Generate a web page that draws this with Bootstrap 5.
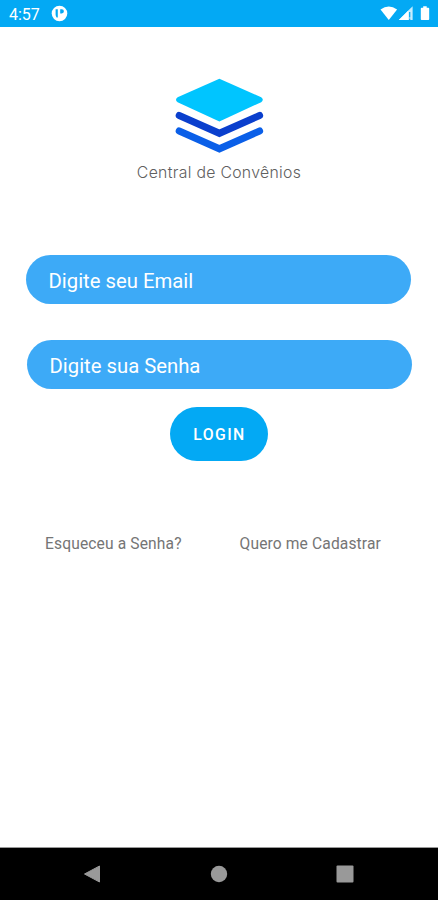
<!DOCTYPE html>
<html lang="pt-BR">
<head>
<meta charset="utf-8">
<meta name="viewport" content="width=device-width, initial-scale=1">
<title>Central de Convênios</title>
<link href="https://cdn.jsdelivr.net/npm/bootstrap@5.3.0/dist/css/bootstrap.min.css" rel="stylesheet">
<style>
body{font-family:Roboto,sans-serif;height:900px;color:#757575;background:#fff;overflow:hidden}
svg{display:block;flex:none}
.status-bar{height:27px;background:#03a9f4;color:#fff;font-size:16px;line-height:27px;padding:0 8px 0 9px}
.status-bar .clock{width:42px;padding-top:1px}
.brand{padding:51px 0 0 0}
.brand-name{font-family:Inter,sans-serif;font-weight:300;font-size:15.8px;line-height:20px;margin-top:10px;letter-spacing:.3px;color:#606060}
.login-form{padding:72px 26px 0}
.form-control.pill{width:385px;height:49px;background:#3daaf7;border:0;border-radius:25px;padding:3px 23px 0 22.5px;font-size:20.3px;color:#fff}
.form-control.pill::placeholder{color:#fff;opacity:1}
.pill.password{margin:36px 0 0 1px}
.btn.login{width:98px;height:54px;margin-top:18px;border:0;background:#03a9f4;color:#fff;font-size:15.8px;font-weight:500;letter-spacing:1.4px;padding:2px 0 0 1px}
.links{padding:73px 57px 0 45px;font-size:15.6px;line-height:20px;letter-spacing:.13px}
.links a{color:#757575}
.nav-keys{height:53px;background:#000;border-top:1px solid #999;padding:0 84px 0 83px}
</style>
</head>
<body class="d-flex flex-column">
<header class="status-bar d-flex align-items-center flex-shrink-0">
  <span class="clock">4:57</span>
  <svg width="17" height="17" viewBox="0 0 17 17"><circle cx="8.5" cy="8.5" r="7.8" fill="#fff"/><path d="M4.600 4.200h2.200v8.200H5.600q-1-1.500-1-3zM9.200 4.200h1.600a2.100 2.100 0 0 1 0 4.200H9.200z" fill="#03a9f4"/></svg>
  <svg class="ms-auto" width="50" height="17" viewBox="0 0 50 17"><path d="M.5 4.600Q8.800-1.700 17.100 4.600L8.800 15z" fill="#fff"/><path d="M32.600 1.300V15H18.800z" fill="#fff" fill-opacity=".78"/><path d="M28.400 5.500V15h-9.600z" fill="#fff"/><path d="M29.700 7v5.500M29.700 13.500V15" stroke="#03a9f4" stroke-width="1.200"/><path d="M43.200 1.200h3.500v1.600h1.700q.8 0 .8.800v10.600q0 .8-.8.8h-6.800q-.8 0-.8-.8V3.600q0-.8.8-.8h1.600z" fill="#fff"/></svg>
</header>
<main class="flex-grow-1">
  <div class="brand d-flex flex-column align-items-center">
    <svg width="90" height="75" viewBox="-.4 0 90 75">
      <path d="M45 .8 86.800 19.200Q90 21.800 86.800 24.200L45 43.500 3.200 24.200Q0 21.800 3.200 19.200z" fill="#00c5ff"/>
      <path d="M4.800 37.500 45 55.300 85.200 37.500" fill="none" stroke="#0a3fcd" stroke-width="7" stroke-linecap="round"/>
      <path d="M4.800 53 45 70.800 85.200 53" fill="none" stroke="#0a5fe8" stroke-width="7" stroke-linecap="round"/>
    </svg>
    <div class="brand-name">Central de Convênios</div>
  </div>
  <form class="login-form d-flex flex-column">
    <input class="form-control pill" type="email" placeholder="Digite seu Email" aria-label="Email">
    <input class="form-control pill password" type="password" placeholder="Digite sua Senha" aria-label="Senha">
    <button class="btn rounded-pill login align-self-center" type="button">LOGIN</button>
  </form>
  <div class="links d-flex justify-content-between">
    <a class="text-decoration-none" href="#">Esqueceu a Senha?</a>
    <a class="text-decoration-none" href="#">Quero me Cadastrar</a>
  </div>
</main>
<footer class="nav-keys d-flex align-items-center justify-content-between flex-shrink-0">
  <svg width="18" height="18" viewBox="0 0 18 18"><path d="M1.500 9 16.500 1v16z" fill="#999" stroke="#999" stroke-linejoin="round"/></svg>
  <svg width="18" height="18" viewBox="0 0 18 18"><circle cx="9" cy="9" r="8.200" fill="#999"/></svg>
  <svg width="18" height="18" viewBox="0 0 18 18"><rect x=".5" y=".5" width="17" height="17" rx="1" fill="#999"/></svg>
</footer>
<script src="https://cdn.jsdelivr.net/npm/bootstrap@5.3.0/dist/js/bootstrap.bundle.min.js"></script>
</body>
</html>
